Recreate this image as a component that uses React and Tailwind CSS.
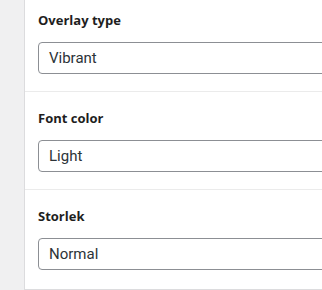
export default function App() {
  const sections = [
    { label: "Overlay type", value: "Vibrant" },
    { label: "Font color", value: "Light" },
    { label: "Storlek", value: "Normal" },
  ];
  return (
    <div
      className="w-[322px] h-[290px] overflow-hidden bg-[#f0f0f1]"
      style={{ fontFamily: 'Roboto, "Liberation Sans", sans-serif' }}
    >
      <div className="ml-[24px] w-[420px] bg-white border-l border-b border-[#dcdcde]">
        {sections.map((s, i) => (
          <div
            key={s.label}
            className={
              i === 0
                ? "pl-[13px] pt-[10px] pb-[17px]"
                : i === 2
                ? "pl-[13px] pt-[16px] pb-[19px] border-t border-[#ebebeb]"
                : "pl-[13px] pt-[16px] pb-[17px] border-t border-[#ebebeb]"
            }
          >
            <div
              className="text-[13px] leading-[20px] font-bold text-[#1e1e1e] mb-[12px]"
              style={{ fontFamily: '"Open Sans", sans-serif' }}
            >
              {s.label}
            </div>
            <div className="h-[32px] w-[360px] border border-[#8c8f94] rounded-[4px] bg-white flex items-center pl-[10px] text-[15px] text-[#2c3338]">
              {s.value}
            </div>
          </div>
        ))}
      </div>
    </div>
  );
}
